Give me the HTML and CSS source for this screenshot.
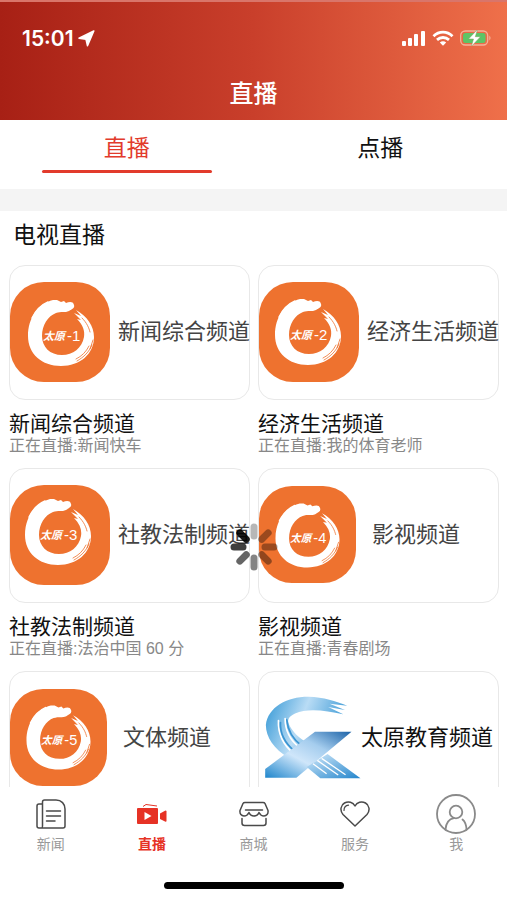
FILE: index.html
```html
<!DOCTYPE html>
<html lang="zh-CN">
<head>
    <meta charset="UTF-8">
    <meta name="viewport" content="width=device-width, initial-scale=1.0">
    <title>直播</title>
    <link rel="stylesheet" href="styles.css">
</head>
<body>
    <!-- shared brush ring used by the channel logos -->
    <svg class="defs" width="0" height="0" aria-hidden="true">
        <symbol id="ring" viewBox="0 0 100 100" overflow="visible">
            <path fill="#fff" d="M64 23C63 19 59 20 56 21L54 19L51 20L47 18L43 18C28 22 18 36 18 54C18 72 32 84 51 84C70 84 84 72 84 55C84 44 77 34 66 28L71 34L64 31L71 38L67 37C73 43 75 49 74 55C72 66 63 73 52 73C40 73 32 65 32 54C32 43 38 34 46 31C51 29 55 31 59 29C62 27 65 26 64 23Z"/>
            <path fill="none" stroke="#fff" stroke-width="1.4" stroke-linecap="round" d="M22 36C26 28 31 23 38 20M25 36C28 30 33 25 40 21"/>
            <path fill="none" stroke="#ee722f" stroke-width=".8" stroke-linecap="round" d="M82 63C79 70 74 75 67 79M79 64C76 70 72 74 66 77M72 36C77 41 79 46 80 50M83 58L80 67"/>
        </symbol>
    </svg>

    <div class="app">
        <header class="header">
            <div class="status">
                <span class="status-time">15:01</span>
                <svg width="17" height="17" viewBox="0 0 17 17"><path fill="#fff" stroke="#fff" stroke-width="1.500" stroke-linejoin="round" d="M15.800 1L1 8.200L8 9.300L9.500 15.800Z"/></svg>
                <div class="status-right">
                    <svg width="25" height="16" viewBox="0 0 25 16" fill="#fff"><rect x="1" y="11" width="4" height="5" rx="1"/><rect x="7" y="8" width="4" height="8" rx="1"/><rect x="13" y="4" width="4" height="12" rx="1"/><rect x="20" y="1" width="4" height="15" rx="1"/></svg>
                    <svg width="22" height="16" viewBox="0 0 22 16" fill="none" stroke="#fff" stroke-width="2.800"><path d="M1.500 6.200C7 .8 15 .8 20.500 6.200"/><path d="M5 9.900C8.500 6.700 13.500 6.700 17 9.900"/><path fill="#fff" stroke="none" d="M7.800 12.500C9.700 10.900 12.300 10.900 14.200 12.500L11 15.800Z"/></svg>
                    <svg width="32" height="16" viewBox="0 0 32 16"><rect x=".7" y="1" width="27" height="14" rx="4.500" fill="none" stroke="#f5b19a" stroke-width="1.300"/><rect x="3" y="3" width="22.500" height="10" rx="2.500" fill="#5dc466"/><path d="M29.300 5.500Q31.800 8 29.300 10.500Z" fill="#f5b19a"/><path d="M17.500 -.5L8.500 9H13.500L11.300 16.500L20.500 6.700H15.300Z" fill="#fff" stroke="#7fa05c" stroke-width=".5"/></svg>
                </div>
            </div>
            <h1 class="title">直播</h1>
        </header>

        <div class="tabs" role="tablist">
            <button class="tab active" type="button" role="tab" aria-selected="true">直播</button>
            <button class="tab" type="button" role="tab" aria-selected="false">点播</button>
        </div>

        <main class="content">
            <h2 class="section-title">电视直播</h2>
            <div class="grid">
                <article class="card">
                    <div class="thumb">
                        <svg class="logo" viewBox="0 0 100 100"><rect width="100" height="100" rx="34" fill="#ee722f"/><use href="#ring" width="100" height="100"/><text class="logo-brush" x="33" y="58">太原</text><text class="logo-num" x="57" y="59">-1</text></svg>
                        <span class="thumb-name">新闻综合频道</span>
                    </div>
                    <h3 class="name">新闻综合频道</h3>
                    <p class="live">正在直播:新闻快车</p>
                </article>
                <article class="card">
                    <div class="thumb">
                        <svg class="logo" viewBox="0 0 100 100"><rect width="100" height="100" rx="34" fill="#ee722f"/><use href="#ring" x="-2" y="-1" width="100" height="100"/><text class="logo-brush" x="31" y="57">太原</text><text class="logo-num" x="55" y="58">-2</text></svg>
                        <span class="thumb-name">经济生活频道</span>
                    </div>
                    <h3 class="name">经济生活频道</h3>
                    <p class="live">正在直播:我的体育老师</p>
                </article>
                <article class="card">
                    <div class="thumb">
                        <svg class="logo" viewBox="0 0 100 100"><rect width="100" height="100" rx="34" fill="#ee722f"/><use href="#ring" x="-3" y="-4" width="100" height="100"/><text class="logo-brush" x="30" y="54">太原</text><text class="logo-num" x="54" y="55">-3</text></svg>
                        <span class="thumb-name">社教法制频道</span>
                    </div>
                    <h3 class="name">社教法制频道</h3>
                    <p class="live">正在直播:法治中国 60 分</p>
                </article>
                <article class="card">
                    <div class="thumb thumb-short">
                        <svg class="logo" viewBox="0 0 100 100"><rect width="100" height="100" rx="34" fill="#ee722f"/><use href="#ring" x="-1" width="100" height="100"/><text class="logo-brush" x="32" y="58">太原</text><text class="logo-num" x="56" y="59">-4</text></svg>
                        <span class="thumb-name">影视频道</span>
                    </div>
                    <h3 class="name">影视频道</h3>
                    <p class="live">正在直播:青春剧场</p>
                </article>
                <article class="card">
                    <div class="thumb thumb-short">
                        <svg class="logo" viewBox="0 0 100 100"><rect width="100" height="100" rx="34" fill="#ee722f"/><use href="#ring" x="-1" y="-1" width="100" height="100"/><text class="logo-brush" x="32" y="57">太原</text><text class="logo-num" x="56" y="58">-5</text></svg>
                        <span class="thumb-name">文体频道</span>
                    </div>
                </article>
                <article class="card">
                    <div class="thumb thumb-edu">
                        <svg class="logo-edu" viewBox="38 98 288 250">
                            <defs>
                                <linearGradient id="swoosh" x1="0" y1="0" x2="1" y2=".3"><stop offset="0" stop-color="#2f95d4"/><stop offset=".5" stop-color="#b9dcf5"/><stop offset="1" stop-color="#3f9bd6"/></linearGradient>
                                <linearGradient id="bar" x1="0" y1="1" x2="1" y2="0"><stop offset="0" stop-color="#1f86cc"/><stop offset=".4" stop-color="#cfe6fa"/><stop offset=".65" stop-color="#a5cdee"/><stop offset="1" stop-color="#1c63a8"/></linearGradient>
                                <linearGradient id="tail" x1="0" y1="0" x2="1" y2="1"><stop offset="0" stop-color="#d5ebfb"/><stop offset="1" stop-color="#2385cc"/></linearGradient>
                            </defs>
                            <path fill="url(#swoosh)" d="M108 283C65 258 40 222 40 185C46 132 102 100 168 100C215 101 250 114 285 127L232 121L278 140L228 131L273 153C220 142 165 134 128 151C108 160 102 172 112 188C122 207 140 224 164 238Z"/>
                            <path fill="none" stroke="#fff" stroke-width="5" stroke-linecap="round" d="M78 172C76 212 94 246 122 270M98 166C98 203 116 234 143 255"/>
                            <path fill="none" stroke="#3b95d2" stroke-width="5" stroke-linecap="round" d="M84 178C82 213 99 241 126 264M103 170C106 203 123 230 149 249"/>
                            <path fill="url(#bar)" d="M38 344V318L188 206H298L132 344Z"/>
                            <path fill="url(#tail)" d="M226 273L325 346H204L163 312Z"/>
                            <path fill="none" stroke="#fff" stroke-width="4" d="M208 286L280 335M195 292L258 336M182 302L223 332"/>
                        </svg>
                        <span class="thumb-name">太原教育频道</span>
                    </div>
                </article>
            </div>
        </main>

        <nav class="tabbar">
            <div class="tabbar-items">
                <a class="item" href="#">
                    <span class="item-icon"><svg width="30" height="30" viewBox="0 0 30 30" fill="none" stroke="#4a4a4a" stroke-width="1.500" stroke-linecap="round" stroke-linejoin="round"><path d="M8.500 1H20C25.500 1 29 5 29 10V27Q29 29 27 29H3Q1 29 1 27V7Q1 5 3 5H5.500M5.500 29Q6.500 29 6.500 27V3Q6.500 1 8.500 1"/><path d="M10.500 12H24.500M10.500 17H24.500M10.500 22H19"/></svg></span>
                    <span class="item-label">新闻</span>
                </a>
                <a class="item active" href="#">
                    <span class="item-icon"><svg width="30" height="22" viewBox="0 0 30 22" fill="#e63225"><path d="M1 5H20Q21 5 21 6V20Q21 21 20 21H1Q0 21 0 20V6Q0 5 1 5Z"/><path d="M23 10.500L28.500 7.500Q29.500 7.500 29.500 8.500V18Q29.500 19 28.500 18.800L23 16Z"/><path d="M6 3.500L9 1.500L20 3" fill="none" stroke="#e63225" stroke-width="1"/><path fill="#fff" d="M7.500 9V17L14.500 13Z"/></svg></span>
                    <span class="item-label">直播</span>
                </a>
                <a class="item" href="#">
                    <span class="item-icon"><svg width="30" height="26" viewBox="0 0 30 26" fill="none" stroke="#4a4a4a" stroke-width="1.500" stroke-linecap="round" stroke-linejoin="round"><path d="M6 1.500H24Q25.500 1.500 26 2.500L29 9.500C29.500 13 27.500 15 25 15C22.500 15 21 13.500 20 11.500C19 14 17.500 15 15 15C12.500 15 11 14 10 11.500C9 13.500 7.500 15 5 15C2.500 15 .5 13 1 9.500L4 2.500Q4.500 1.500 6 1.500Z"/><path d="M6.500 9H23.500M3 17.500V22Q3 24.500 5.500 24.500H24.500Q27 24.500 27 22V17.500"/></svg></span>
                    <span class="item-label">商城</span>
                </a>
                <a class="item" href="#">
                    <span class="item-icon"><svg width="30" height="26" viewBox="0 0 30 26" fill="none" stroke="#4a4a4a" stroke-width="1.500" stroke-linecap="round" stroke-linejoin="round"><path d="M15 25L3 13.500C-.5 9.500 .8 4 4.500 2C8.500 -.2 13 1.200 15 5C17 1.200 21.500 -.2 25.500 2C29.200 4 30.500 9.500 27 13.500Z"/><path stroke-width="1.200" d="M4 9.500C4 6.500 6 4.500 8.500 4.200"/></svg></span>
                    <span class="item-label">服务</span>
                </a>
                <a class="item" href="#">
                    <span class="item-icon"><svg width="40" height="40" viewBox="0 0 40 40" fill="none" stroke="#8a8a8a" stroke-width="1.800" stroke-linecap="round"><circle cx="20" cy="20" r="19"/><circle cx="20" cy="18" r="6.300"/><path d="M9.500 35.500C10 29 13.500 25 18 24.200M26.500 25.500C29 27.500 30.300 31 30.500 35.500"/></svg></span>
                    <span class="item-label">我</span>
                </a>
            </div>
            <div class="home-bar"></div>
        </nav>

        <svg class="spinner" viewBox="-24 -24 48 48" role="img" aria-label="加载中">
            <g stroke="#000" stroke-width="7" stroke-linecap="round">
                <path d="M0 -11V-20" opacity=".28"/>
                <path d="M0 -11V-20" opacity=".35" transform="rotate(45)"/>
                <path d="M0 -11V-20" opacity=".35" transform="rotate(90)"/>
                <path d="M0 -11V-20" opacity=".38" transform="rotate(135)"/>
                <path d="M0 -11V-20" opacity=".48" transform="rotate(180)"/>
                <path d="M0 -11V-20" opacity=".6" transform="rotate(225)"/>
                <path d="M0 -11V-20" opacity=".75" transform="rotate(270)"/>
                <path d="M0 -11V-20" opacity=".9" transform="rotate(315)"/>
            </g>
        </svg>
    </div>
</body>
</html>
```

FILE: styles.css
```css
* {
    box-sizing: border-box;
}
body {
    margin: 0;
    font-family: "Liberation Sans", "Noto Sans CJK SC", sans-serif;
    color: #111;
    background-color: #fff;
}
h1, h2, h3, p {
    margin: 0;
    font-weight: 400;
}
svg {
    display: block;
    flex-shrink: 0;
}
.defs {
    position: absolute;
}
.app {
    position: relative;
    display: flex;
    flex-direction: column;
    height: 100vh;
    overflow: hidden;
}

/* header */
.header {
    flex-shrink: 0;
    padding: 20px 0 8px;
    border-top: 2px solid #d9756a;
    color: #fff;
    background: linear-gradient(to right, #a72015, #c93f2b 50%, #ef704a);
}
.status {
    display: flex;
    align-items: center;
    gap: 4px;
    height: 32px;
    padding: 0 15px 0 22px;
}
.status-time {
    font-family: Inter, sans-serif;
    font-size: 21px;
    font-weight: 600;
}
.status-right {
    display: flex;
    align-items: center;
    gap: 6px;
    margin-left: auto;
}
.title {
    margin-top: 22px;
    font-size: 24px;
    font-weight: 500;
    line-height: 36px;
    text-align: center;
}

/* tabs */
.tabs {
    display: flex;
    flex-shrink: 0;
    height: 91px;
    border-bottom: 22px solid #f4f4f4;
}
.tab {
    display: flex;
    flex: 1;
    flex-direction: column;
    align-items: center;
    padding: 10px 0 0;
    border: 0;
    background: none;
    font-family: inherit;
    font-size: 23px;
    line-height: 36px;
    color: #111;
}
.tab.active {
    color: #e23b2c;
}
.tab.active::after {
    content: "";
    width: 67%;
    height: 3px;
    margin-top: 4px;
    border-radius: 2px;
    background-color: #e23b2c;
}

/* channels */
.content {
    flex: 1;
    min-height: 0;
    overflow: hidden;
}
.section-title {
    margin-bottom: 6px;
    padding-left: 13px;
    font-size: 23px;
    line-height: 48px;
}
.grid {
    display: grid;
    grid-template-columns: repeat(2, minmax(0, 1fr));
    gap: 12px 8px;
    padding: 0 8px 0 9px;
}
.thumb {
    display: flex;
    align-items: center;
    gap: 8px;
    height: 135px;
    padding-bottom: 2px;
    margin-bottom: 12px;
    border: 1px solid #e8e8e8;
    border-radius: 16px;
}
.logo {
    width: 100px;
    height: 100px;
}
.logo-brush {
    font-family: "Noto Sans CJK SC", sans-serif;
    font-size: 11px;
    font-style: italic;
    font-weight: 700;
    fill: #fff;
}
.logo-num {
    font-family: "Liberation Sans", sans-serif;
    font-size: 15px;
    fill: #fff;
}
.thumb-name {
    font-size: 22px;
    line-height: 28px;
    color: #444;
    white-space: nowrap;
}
.thumb-short {
    gap: 16px;
}
.thumb-short .logo {
    width: 97px;
    height: 97px;
}
.thumb-edu {
    gap: 0;
    padding-left: 6px;
}
.thumb-edu .thumb-name {
    color: #111;
}
.logo-edu {
    width: 96px;
    height: 83px;
}
.name {
    font-size: 21px;
    line-height: 24px;
}
.live {
    font-size: 16px;
    line-height: 20px;
    color: #888;
}

/* bottom bar */
.tabbar {
    flex-shrink: 0;
    height: 113px;
    padding-top: 7px;
    background-color: #fff;
}
.tabbar-items {
    display: flex;
}
.item {
    display: flex;
    flex: 1;
    flex-direction: column;
    align-items: center;
    text-decoration: none;
    color: #999;
}
.item.active {
    font-weight: 700;
    color: #e63225;
}
.item-icon {
    display: flex;
    align-items: center;
    height: 40px;
}
.item-label {
    font-size: 14px;
    line-height: 20px;
}
.home-bar {
    width: 180px;
    height: 7px;
    margin: 28px auto 0;
    border-radius: 4px;
    background-color: #000;
}

.spinner {
    position: absolute;
    top: 523px;
    left: 50%;
    width: 48px;
    height: 48px;
    transform: translateX(-50%);
}
```
